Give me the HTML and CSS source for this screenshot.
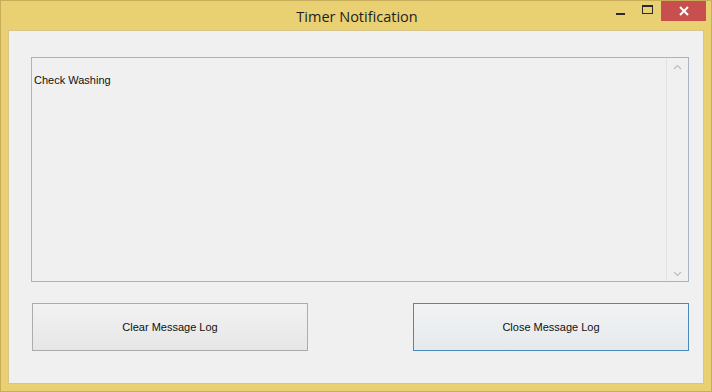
FILE: index.html
```html
<!DOCTYPE html>
<html>
<head>
<meta charset="utf-8">
<link rel="stylesheet" href="styles.css">
</head>
<body>
<div class="window">
  <div class="titlebar">
    <div class="title">Timer Notification</div>
    <div class="controls">
      <div class="ctl min"><svg width="10" height="10" viewBox="0 0 10 10"><rect x="0" y="7" width="9" height="2" fill="#2b2b2b"/></svg></div>
      <div class="ctl max"><svg width="11" height="10" viewBox="0 0 11 10"><rect x="0.5" y="0.5" width="10" height="8" fill="none" stroke="#2b2b2b"/><rect x="0" y="0" width="11" height="2" fill="#2b2b2b"/></svg></div>
      <div class="ctl close"><svg width="12" height="10" viewBox="0 0 12 10"><path d="M2 1 L10 9 M10 1 L2 9" stroke="#fff" stroke-width="2"/></svg></div>
    </div>
  </div>
  <div class="client">
    <div class="log">
      <div class="log-text">Check Washing</div>
      <div class="scroll">
        <svg class="arrow" width="9" height="6" viewBox="0 0 9 6"><path d="M1 5 L4.5 1.5 L8 5" fill="none" stroke="#bdbdbd" stroke-width="1.2"/></svg>
        <div class="track"></div>
        <svg class="arrow" width="9" height="6" viewBox="0 0 9 6"><path d="M1 1 L4.5 4.5 L8 1" fill="none" stroke="#bdbdbd" stroke-width="1.2"/></svg>
      </div>
    </div>
    <div class="buttons">
      <button class="btn">Clear Message Log</button>
      <button class="btn default">Close Message Log</button>
    </div>
  </div>
</div>
</body>
</html>
```
FILE: styles.css
```css
* { box-sizing: border-box; }
html, body { margin: 0; padding: 0; }
body { width: 712px; height: 392px; overflow: hidden; font-family: "Liberation Sans", Arial, sans-serif; }
.window {
  width: 712px; height: 392px;
  background: #e9d073;
  border: 1px solid #c8ae58;
  display: flex; flex-direction: column;
}
.titlebar {
  height: 29px; position: relative;
  display: flex; align-items: center; justify-content: center;
}
.title {
  font-family: "Open Sans", "Liberation Sans", sans-serif;
  font-size: 14.5px; color: #1e1e1e; margin-left: 2px; margin-top: 1px;
}
.controls {
  position: absolute; top: 0; right: 5px;
  display: flex; align-items: flex-start;
}
.ctl { height: 20px; display: flex; align-items: center; justify-content: center; }
.min { width: 26px; }
.max { width: 27px; padding-bottom: 2px; }
.close { width: 45px; background: #c7504f; }
.client {
  flex: 1; margin: 0 7px 7px 7px;
  background: #f0f0f0;
  border: 1px solid #d8c58a;
  padding: 26px 14px 0 22px;
  display: flex; flex-direction: column;
}
.log {
  height: 225px; border: 1px solid #a7b4c2;
  background: #f0f0f0;
  display: flex;
}
.log-text {
  flex: 1; padding: 16px 0 0 2px;
  font-size: 11px; color: #111;
}
.scroll {
  width: 22px; display: flex; flex-direction: column; align-items: center;
  padding: 6px 0 4px 0; border-left: 1px solid #e3e3e3;
}
.track { flex: 1; }
.buttons {
  margin-top: 21px; padding-left: 1px;
  display: flex; justify-content: space-between;
}
.btn {
  width: 276px; height: 48px;
  border: 1px solid #acacac;
  background: linear-gradient(#f2f2f2, #e6e6e6);
  font-family: "Liberation Sans", Arial, sans-serif;
  font-size: 11px; color: #111;
  padding: 0 0 1px 0; margin: 0;
}
.btn.default { border-color: #4b88bd; background: linear-gradient(#f1f3f5, #e6e9ec); }
```
